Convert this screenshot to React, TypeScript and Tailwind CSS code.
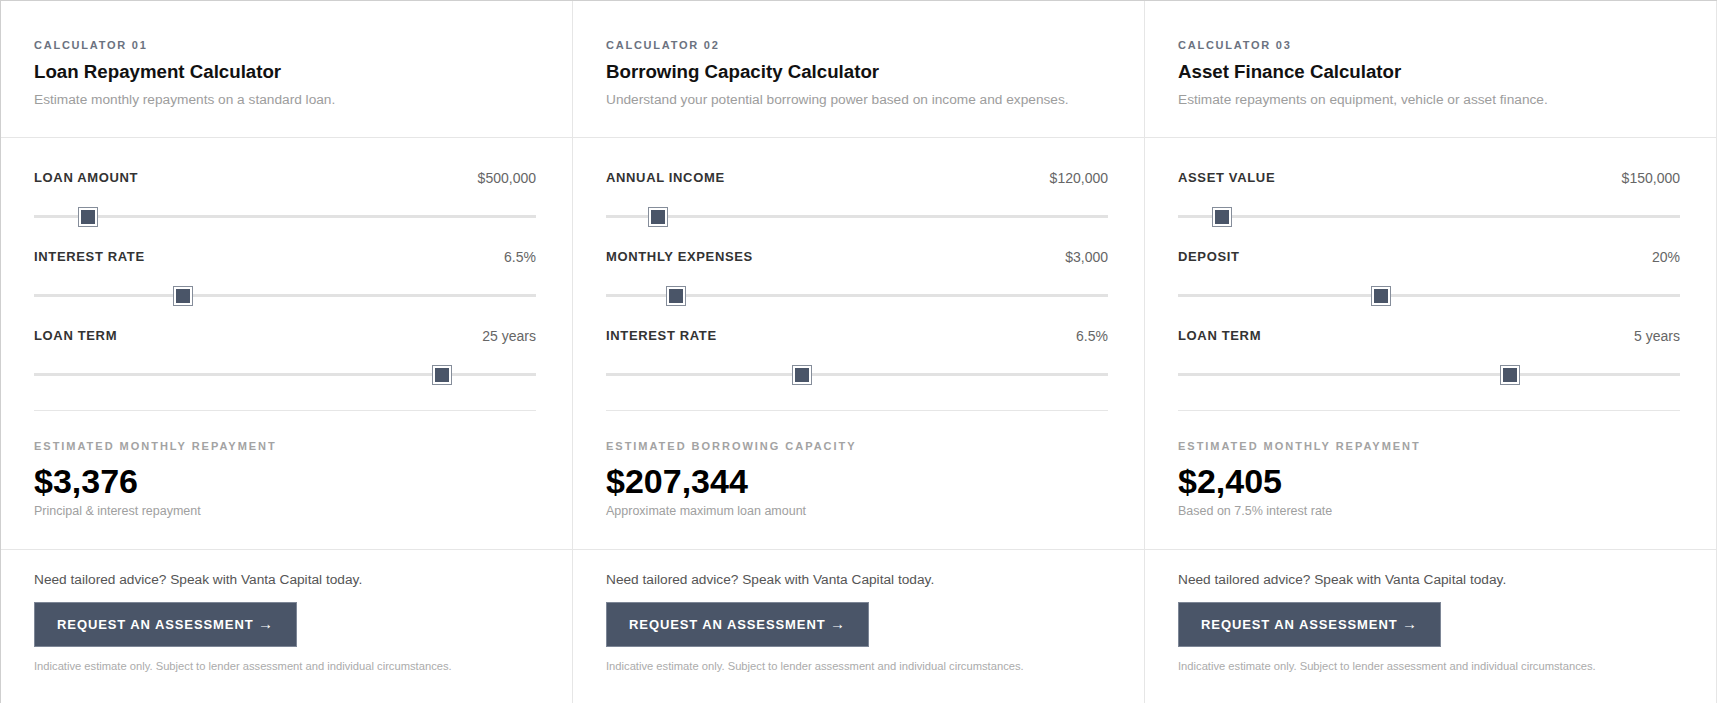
import { useState } from "react";

type Field = {
    label: string;
    value: string;
    position: number; // 0..1 along the track
};

type Calculator = {
    tag: string;
    title: string;
    description: string;
    fields: Field[];
    resultLabel: string;
    result: string;
    resultNote: string;
};

const calculators: Calculator[] = [
    {
        tag: "Calculator 01",
        title: "Loan Repayment Calculator",
        description: "Estimate monthly repayments on a standard loan.",
        fields: [
            { label: "Loan Amount", value: "$500,000", position: 0.0905 },
            { label: "Interest Rate", value: "6.5%", position: 0.288 },
            { label: "Loan Term", value: "25 years", position: 0.8266 },
        ],
        resultLabel: "Estimated Monthly Repayment",
        result: "$3,376",
        resultNote: "Principal & interest repayment",
    },
    {
        tag: "Calculator 02",
        title: "Borrowing Capacity Calculator",
        description: "Understand your potential borrowing power based on income and expenses.",
        fields: [
            { label: "Annual Income", value: "$120,000", position: 0.088 },
            { label: "Monthly Expenses", value: "$3,000", position: 0.125 },
            { label: "Interest Rate", value: "6.5%", position: 0.386 },
        ],
        resultLabel: "Estimated Borrowing Capacity",
        result: "$207,344",
        resultNote: "Approximate maximum loan amount",
    },
    {
        tag: "Calculator 03",
        title: "Asset Finance Calculator",
        description: "Estimate repayments on equipment, vehicle or asset finance.",
        fields: [
            { label: "Asset Value", value: "$150,000", position: 0.07 },
            { label: "Deposit", value: "20%", position: 0.4 },
            { label: "Loan Term", value: "5 years", position: 0.668 },
        ],
        resultLabel: "Estimated Monthly Repayment",
        result: "$2,405",
        resultNote: "Based on 7.5% interest rate",
    },
];

function Slider({ position }: { position: number }) {
    return (
        <div className="relative h-[20px] mt-[19px]">
            <div className="absolute left-0 right-0 top-[8px] h-[3px] bg-[#e2e2e2]" />
            <div
                className="absolute top-0 w-[20px] h-[20px] border border-[#858d9a] bg-white p-[2px]"
                style={{ left: `calc(${position * 100}% - ${position * 20}px)` }}
            >
                <div className="w-full h-full bg-[#4a5568]" />
            </div>
        </div>
    );
}

function CalculatorCard({ calc }: { calc: Calculator }) {
    return (
        <div className="flex flex-col border-r border-[#e6e6e6]">
            {/* Heading */}
            <div className="pl-[33px] pr-[36px] pt-[36px] pb-[27px] border-b border-[#e6e6e6]">
                <div className="text-[11px] leading-[16px] font-bold uppercase tracking-[0.16em] text-[#6b7280]">
                    {calc.tag}
                </div>
                <h2 className="mt-[6px] text-[18.7px] leading-[26px] font-bold text-[#111]">{calc.title}</h2>
                <p className="mt-[5px] text-[13.7px] leading-[20px] text-[#9d9d9d]">{calc.description}</p>
            </div>

            {/* Inputs + result */}
            <div className="pl-[33px] pr-[36px] pt-[30px] pb-[29px] border-b border-[#e6e6e6]">
                <div className="flex flex-col gap-[20px]">
                    {calc.fields.map((f) => (
                        <div key={f.label}>
                            <div className="flex justify-between items-center h-[20px]">
                                <span className="text-[13px] font-bold uppercase tracking-[0.05em] text-[#333]">
                                    {f.label}
                                </span>
                                <span className="text-[14px] text-[#666]">{f.value}</span>
                            </div>
                            <Slider position={f.position} />
                        </div>
                    ))}
                </div>

                <div className="mt-[25px] h-px bg-[#e6e6e6]" />

                <div className="pt-[27px]">
                    <div className="text-[11px] leading-[16px] font-bold uppercase tracking-[0.18em] text-[#a3a3a3]">
                        {calc.resultLabel}
                    </div>
                    <div className="mt-[8px] text-[34px] leading-[38px] font-bold text-black">{calc.result}</div>
                    <div className="mt-[2px] text-[12.5px] leading-[18px] text-[#a0a0a0]">{calc.resultNote}</div>
                </div>
            </div>

            {/* Call to action */}
            <div className="pl-[33px] pr-[36px] pt-[20px] pb-[32px]">
                <p className="text-[13.7px] leading-[20px] text-[#555]">Need tailored advice? Speak with Vanta Capital today.</p>
                <button className="mt-[12px] h-[45px] px-[22px] bg-[#4a5568] border border-[#7d8696] text-white text-[13px] font-bold uppercase tracking-[0.07em]">
                    Request an Assessment <span className="text-[15px]">→</span>
                </button>
                <p className="mt-[11px] text-[11.2px] leading-[16px] text-[#ababab]">
                    Indicative estimate only. Subject to lender assessment and individual circumstances.
                </p>
            </div>
        </div>
    );
}

export default function App() {
    const [items] = useState(calculators);

    return (
        <div className="bg-white" style={{ fontFamily: '"Liberation Sans", Arial, sans-serif' }}>
            <div className="grid grid-cols-3 border-t border-l border-[#cfcfcf]">
                {items.map((c) => (
                    <CalculatorCard key={c.tag} calc={c} />
                ))}
            </div>
        </div>
    );
}
